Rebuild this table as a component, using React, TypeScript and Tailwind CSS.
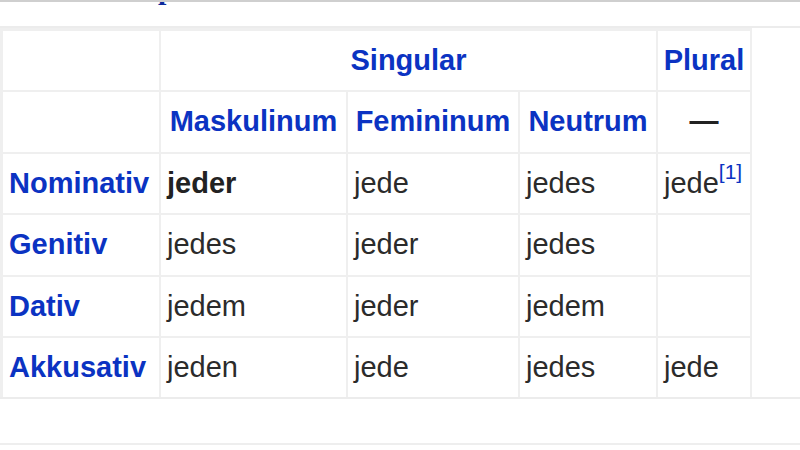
import React from 'react';

const BLUE = 'text-[#0b33c2]';

type Cell = { text?: React.ReactNode; head?: boolean; bold?: boolean; span?: number; center?: boolean };

const rows: Cell[][] = [
  [
    { text: '', head: true },
    { text: 'Singular', head: true, span: 3, center: true },
    { text: 'Plural', head: true, center: true },
  ],
  [
    { text: '', head: true },
    { text: 'Maskulinum', head: true, center: true },
    { text: 'Femininum', head: true, center: true },
    { text: 'Neutrum', head: true, center: true },
    { text: '—', center: true, bold: true },
  ],
  [
    { text: 'Nominativ', head: true },
    { text: 'jeder', bold: true },
    { text: 'jede' },
    { text: 'jedes' },
    {
      text: (
        <>
          jede
          <sup className={`${BLUE} text-[21px] relative -top-[11px] font-normal`}>[1]</sup>
        </>
      ),
    },
  ],
  [{ text: 'Genitiv', head: true }, { text: 'jedes' }, { text: 'jeder' }, { text: 'jedes' }, { text: '' }],
  [{ text: 'Dativ', head: true }, { text: 'jedem' }, { text: 'jeder' }, { text: 'jedem' }, { text: '' }],
  [{ text: 'Akkusativ', head: true }, { text: 'jeden' }, { text: 'jede' }, { text: 'jedes' }, { text: 'jede' }],
];

export default function App() {
  return (
    <div className="w-[800px] h-[450px] bg-white overflow-hidden font-['Liberation_Sans',Arial,sans-serif]">
      {/* heading descender peeking in from above */}
      <div className="border-t-2 border-[#cfcfcf] h-[26px] overflow-hidden pl-[158px]">
        <span className="block -mt-[28px] font-['Liberation_Serif',serif] font-bold text-[30px] leading-[30px] text-[#0c2a9c]">
          p
        </span>
      </div>

      <div className="w-full border-y-2 border-[#ececec]">
        <div className="w-[752px] bg-[#efefef] pl-[3px] pt-[3px] pb-0 pr-[2px]">
          <div className="grid grid-cols-[156px_185px_170px_136px_92px] auto-rows-[59.4px] gap-[2px]">
            {rows.map((row, r) =>
              row.map((c, i) => (
                <div
                  key={`${r}-${i}`}
                  className={`bg-white flex items-center px-[6px] text-[29px] whitespace-nowrap ${
                    c.span === 3 ? 'col-span-3' : ''
                  } ${c.center ? 'justify-center' : ''} ${
                    c.head ? `font-bold ${BLUE}` : c.bold ? 'font-bold text-[#222]' : 'text-[#2b2b2b]'
                  }`}
                >
                  {c.text}
                </div>
              ))
            )}
          </div>
        </div>
      </div>

      <div className="h-[46px] border-b-2 border-[#eeeeee]" />
    </div>
  );
}
